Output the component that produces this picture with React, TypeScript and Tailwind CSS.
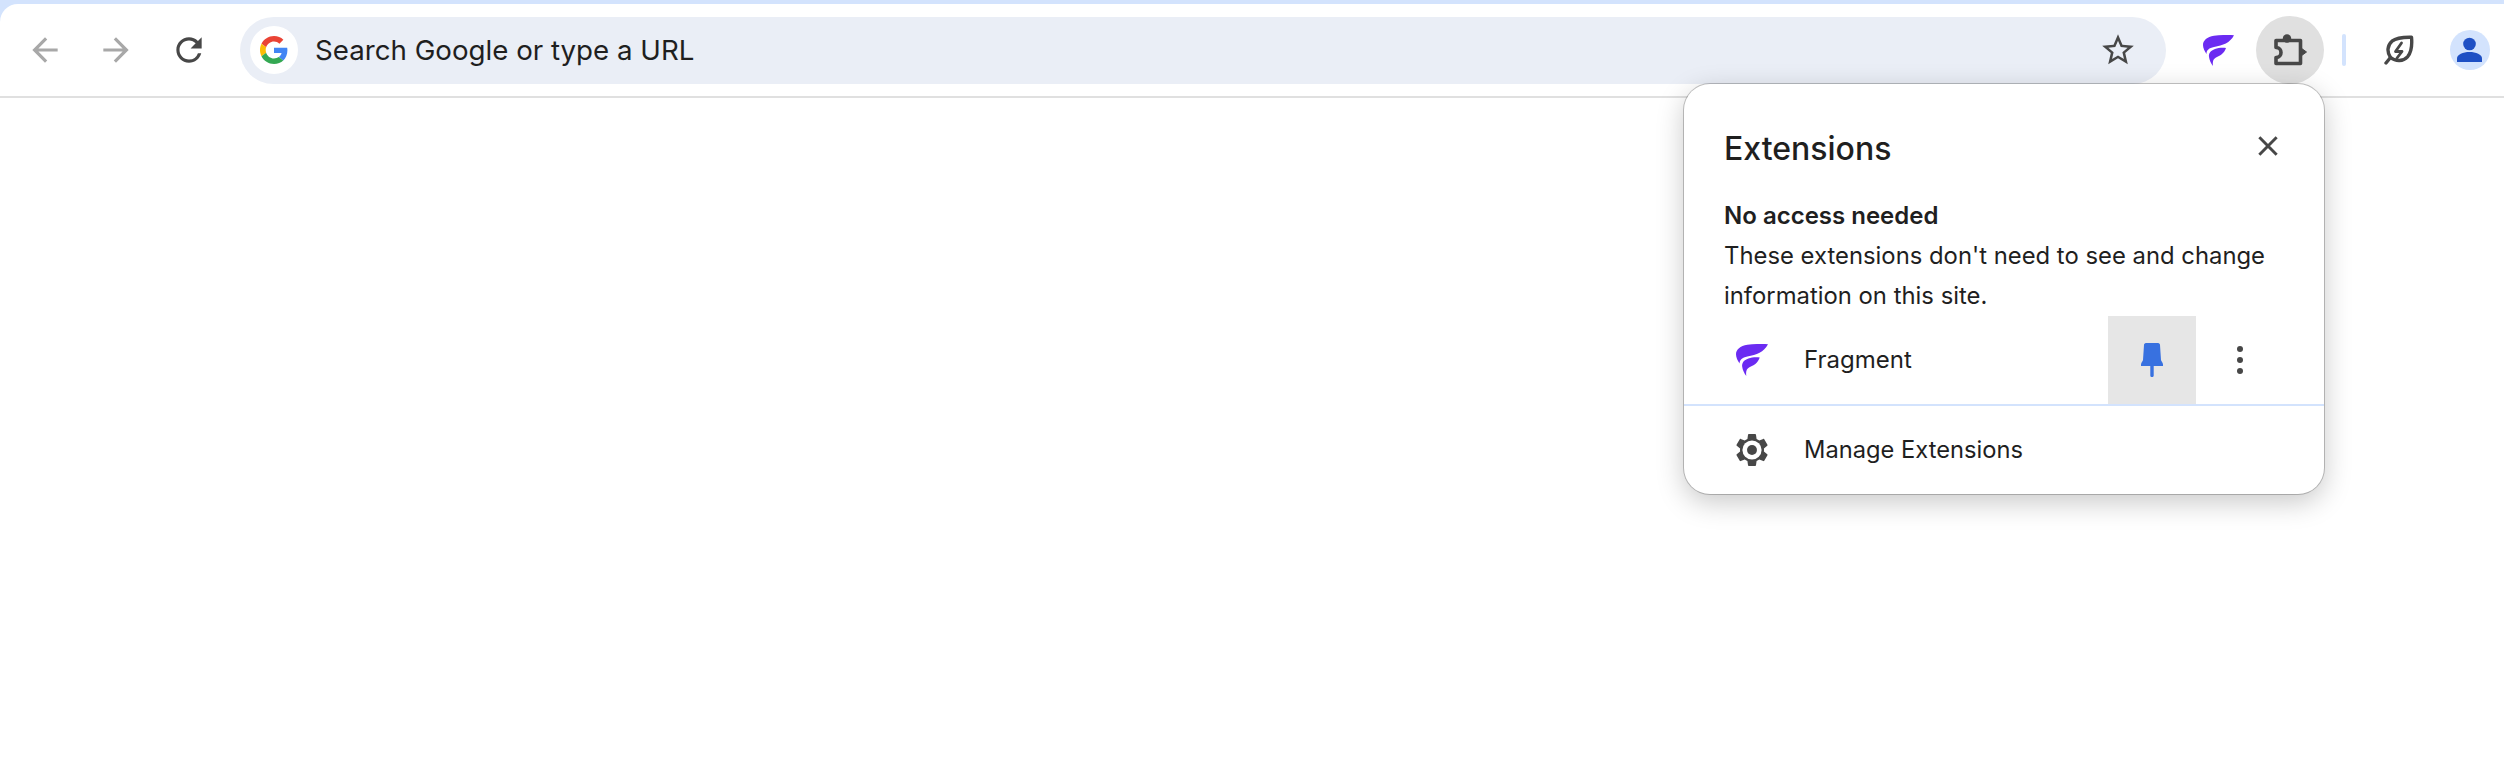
import React from "react";

const FragmentLogo = ({ className }: { className: string }) => (
   <svg viewBox="0 0 31 31" className={className} fill="#6b2bf2">
      <path d="M31 .3C25 -.2 17 -.2 11 .8 4 2 0 5.500 0 10c0 3 1.500 6 3.500 9 0-4 2.500-6 7.500-7 9-1.500 16-4 20-11.700z" />
      <path d="M23 13c-4-.5-8 0-11 1-4.500 1.500-6.500 4.500-6 8 .4 3 2 6.500 4 9-.5-4 0-7 3-8.500 4-2 8-3.500 10-9.500z" />
   </svg>
);

const PuzzleIcon = () => (
   <svg viewBox="0 0 34 32" className="w-[34px] h-[32px]" fill="none">
      <path
         d="M3 6.500H27.500V29.500H3V23.500C6.500 23.500 8 21 8 18.500 8 16 6.500 13.500 3 13.500z"
         stroke="#474747"
         strokeWidth="3.600"
         strokeLinejoin="round"
      />
      <circle cx="14" cy="4.500" r="4.200" fill="#474747" />
      <path d="M28 14l5.500 4-5.500 4z" fill="#474747" stroke="#474747" strokeLinejoin="round" />
   </svg>
);

const LeafIcon = () => (
   <svg viewBox="0 0 30 30" className="w-[30px] h-[30px]" fill="none" stroke="#474747">
      <path
         d="M6.500 22.500C2.500 17 3.500 10 8 6.200 12 3 19 2 27.500 2.200c.8 8.500-.2 15.200-4 19.600-4.300 4.700-11.500 5-17 .7z"
         strokeWidth="3.400"
         strokeLinejoin="round"
      />
      <path d="M6.500 22.500 2 28" strokeWidth="3.400" strokeLinecap="round" />
      <path d="M17.500 8l-6 8.500h6.500l-5 6.500" strokeWidth="2.800" strokeLinejoin="round" strokeLinecap="round" />
   </svg>
);

const GoogleG = () => (
   <svg viewBox="0 0 48 48" className="w-[28px] h-[28px]">
      <path fill="#EA4335" d="M24 9.500c3.540 0 6.710 1.220 9.210 3.600l6.850-6.850C35.900 2.380 30.470 0 24 0 14.620 0 6.510 5.380 2.560 13.220l7.980 6.190C12.430 13.720 17.740 9.500 24 9.500z" />
      <path fill="#4285F4" d="M46.980 24.550c0-1.570-.15-3.090-.38-4.550H24v9.020h12.940c-.58 2.960-2.260 5.480-4.780 7.180l7.730 6c4.510-4.180 7.090-10.360 7.090-17.650z" />
      <path fill="#FBBC05" d="M10.530 28.590c-.48-1.450-.76-2.990-.76-4.590s.27-3.140.76-4.590l-7.980-6.190C.92 16.460 0 20.120 0 24c0 3.880.92 7.540 2.560 10.780l7.970-6.190z" />
      <path fill="#34A853" d="M24 48c6.480 0 11.930-2.130 15.890-5.810l-7.730-6c-2.150 1.450-4.920 2.300-8.160 2.300-6.260 0-11.570-4.220-13.470-9.910l-7.980 6.190C6.510 42.620 14.620 48 24 48z" />
   </svg>
);

const GearIcon = () => (
   <svg viewBox="2 1.500 20 21" className="w-[32px] h-[34px]" fill="#474747">
      <path d="M19.430 12.980c.04-.32.07-.64.07-.98 0-.34-.03-.66-.07-.98l2.110-1.650c.19-.15.24-.42.12-.64l-2-3.460c-.09-.16-.26-.25-.44-.25-.06 0-.12.01-.17.03l-2.490 1c-.52-.4-1.080-.73-1.690-.98l-.38-2.650C14.460 2.180 14.250 2 14 2h-4c-.25 0-.46.18-.49.42l-.38 2.650c-.61.25-1.170.59-1.690.98l-2.490-1c-.06-.02-.12-.03-.18-.03-.17 0-.34.09-.43.25l-2 3.460c-.13.22-.07.49.12.64l2.110 1.650c-.04.32-.07.65-.07.98 0 .33.03.66.07.98l-2.110 1.650c-.19.15-.24.42-.12.64l2 3.460c.09.16.26.25.44.25.06 0 .12-.01.17-.03l2.490-1c.52.4 1.080.73 1.690.98l.38 2.650c.03.24.24.42.49.42h4c.25 0 .46-.18.49-.42l.38-2.650c.61-.25 1.170-.59 1.690-.98l2.490 1c.06.02.12.03.18.03.17 0 .34-.09.43-.25l2-3.460c.12-.22.07-.49-.12-.64l-2.110-1.650z" />
      <circle cx="12" cy="12" r="6" fill="#ffffff" />
      <circle cx="12" cy="12" r="3.100" />
   </svg>
);

export default function App() {
   return (
      <div className="relative min-h-[778px] bg-white text-[#1f1f1f] font-['Inter','Liberation_Sans',sans-serif]">
         <div className="bg-[#d3e3fd] pt-1">
            <div className="flex items-center h-[94px] bg-white rounded-tl-[18px] border-b-2 border-[#e0e0e0]">
               <button className="flex items-center justify-center w-[71px] ml-[9px]">
                  <svg viewBox="0 0 24 24" className="w-[38px] h-[38px]" fill="#a8a8a8">
                     <path d="M20 11H7.830l5.590-5.590L12 4l-8 8 8 8 1.410-1.410L7.830 13H20v-2z" />
                  </svg>
               </button>
               <button className="flex items-center justify-center w-[71px]">
                  <svg viewBox="0 0 24 24" className="w-[38px] h-[38px]" fill="#a8a8a8">
                     <path d="M12 4l-1.410 1.410L16.170 11H4v2h12.170l-5.580 5.590L12 20l8-8z" />
                  </svg>
               </button>
               <button className="flex items-center justify-center w-[71px] ml-[2px]">
                  <svg viewBox="0 0 24 24" className="w-[38px] h-[38px]" fill="#474747">
                     <path d="M17.650 6.350A7.958 7.958 0 0 0 12 4c-4.420 0-7.990 3.580-7.990 8s3.570 8 7.990 8c3.730 0 6.840-2.550 7.730-6h-2.080A5.990 5.990 0 0 1 12 18c-3.310 0-6-2.690-6-6s2.690-6 6-6c1.660 0 3.140.69 4.220 1.780L13 11h7V4l-2.350 2.350z" />
                  </svg>
               </button>
               <div className="flex items-center w-[1926px] h-[67px] ml-[16px] pl-[10px] pr-[29px] rounded-full bg-[#eaeef6]">
                  <div className="flex items-center justify-center w-[48px] h-[48px] rounded-full bg-white">
                     <GoogleG />
                  </div>
                  <span className="ml-[17px] pt-[1px] text-[27.700px] leading-none">Search Google or type a URL</span>
                  <svg viewBox="0 0 24 24" className="ml-auto w-[38px] h-[38px]" fill="#474747">
                     <path d="M22 9.240l-7.190-.62L12 2 9.190 8.630 2 9.240l5.460 4.730L5.820 21 12 17.270 18.180 21l-1.630-7.030L22 9.240zM12 15.400l-3.760 2.270 1-4.280-3.320-2.880 4.380-.38L12 6.100l1.710 4.040 4.380.38-3.320 2.880 1 4.280L12 15.400z" />
                  </svg>
               </div>
               <div className="ml-[37px]">
                  <FragmentLogo className="w-[31px] h-[31px]" />
               </div>
               <div className="flex items-center justify-center w-[68px] h-[68px] ml-[22px] rounded-full bg-[#e0e0e0]">
                  <PuzzleIcon />
               </div>
               <div className="w-[4px] h-[32px] ml-[18px] rounded-full bg-[#d3e3fd]" />
               <div className="ml-[38px]">
                  <LeafIcon />
               </div>
               <div className="flex items-center justify-center w-[40px] h-[40px] ml-[36px] rounded-full bg-[#d3e3fd]">
                  <svg viewBox="0 0 40 40" className="w-[40px] h-[40px]" fill="#1f50c4">
                     <circle cx="19.500" cy="14" r="6.300" />
                     <path d="M7 32v-3.500c0-4 6-6.500 12.500-6.500S32 24.500 32 28.500V32z" />
                  </svg>
               </div>
            </div>
         </div>

         <div className="absolute left-[1684px] top-[84px] w-[640px] rounded-[26px] bg-white shadow-[0_0_0_1px_rgba(0,0,0,0.22),0_8px_28px_rgba(0,0,0,0.22)]">
            <div className="relative pt-[45px] pl-[40px] pr-[40px]">
               <h1 className="text-[32px] leading-[40px] font-medium">Extensions</h1>
               <button className="absolute right-[40px] top-[46px]">
                  <svg viewBox="0 0 24 24" className="w-[32px] h-[32px]" fill="none" stroke="#474747" strokeWidth="2.200">
                     <path d="M5.500 5.500l13 13M18.500 5.500l-13 13" />
                  </svg>
               </button>
               <h2 className="mt-[28px] text-[24px] leading-[38px] font-semibold">No access needed</h2>
               <p className="mt-[1px] text-[23.850px] leading-[40px]">
                  These extensions don't need to see and change
                  <br />
                  information on this site.
               </p>
            </div>
            <div className="flex items-center h-[88px] pl-[52px] pr-[40px]">
               <FragmentLogo className="w-[32px] h-[32px]" />
               <span className="ml-[36px] text-[24px]">Fragment</span>
               <button className="flex items-center justify-center w-[88px] h-[88px] ml-auto bg-[#e6e6e6]">
                  <svg viewBox="0 0 22 34" className="w-[22px] h-[34px]" fill="#3871e0">
                     <path d="M5 0h12c1.300 0 2 1 2 2l1 15c.2 1.300 2 2.500 2 4.500V23H12.700v9.500c0 2-3.400 2-3.400 0V23H0v-1.500C0 19.500 1.800 18.300 2 17L3 2c0-1 .7-2 2-2z" />
                  </svg>
               </button>
               <button className="flex flex-col items-center justify-center gap-[5px] w-[88px] h-[88px]">
                  <span className="w-[6px] h-[6px] rounded-full bg-[#474747]" />
                  <span className="w-[6px] h-[6px] rounded-full bg-[#474747]" />
                  <span className="w-[6px] h-[6px] rounded-full bg-[#474747]" />
               </button>
            </div>
            <div className="flex items-center h-[90px] pl-[52px] border-t-2 border-[#d3e3fd]">
               <GearIcon />
               <span className="ml-[36px] text-[23.700px]">Manage Extensions</span>
            </div>
         </div>
      </div>
   );
}
